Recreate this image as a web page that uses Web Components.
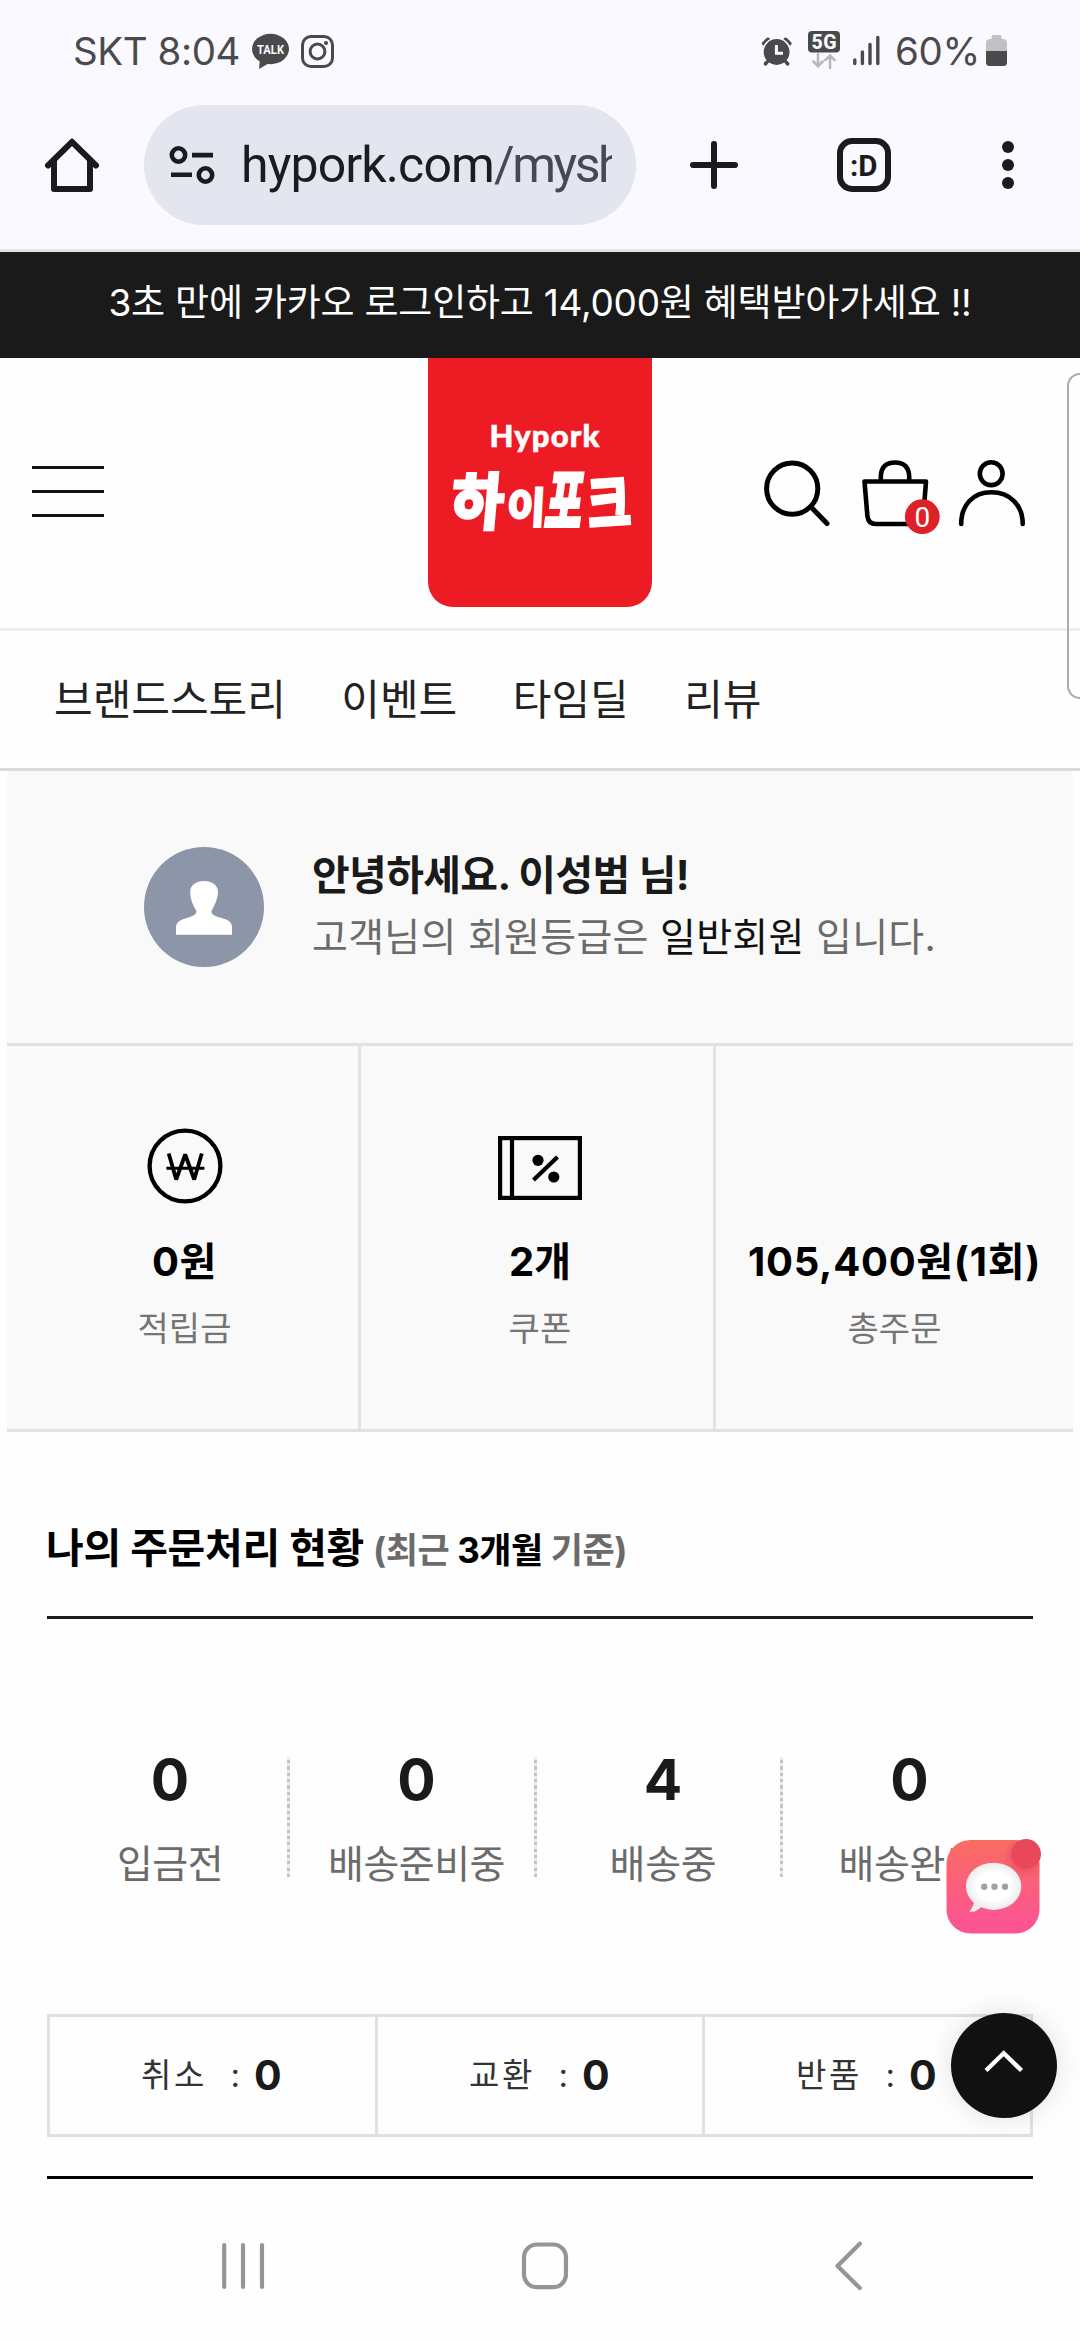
<!DOCTYPE html>
<html lang="ko">
<head>
<meta charset="utf-8">
<title>hypork.com</title>
<style>
  html, body { margin: 0; padding: 0; }
  body { background: #fefefe; font-family: Inter, "Noto Sans CJK KR", sans-serif; color: #1a1a1a; width: 1080px; height: 2340px; overflow: hidden; }
</style>
</head>
<body>
<shop-screen></shop-screen>
<script>
const define = (name, html) => {
  const tpl = document.createElement('template');
  tpl.innerHTML = html;
  customElements.define(name, class extends HTMLElement {
    constructor() {
      super();
      this.attachShadow({ mode: 'open' }).appendChild(tpl.content.cloneNode(true));
    }
  });
};

define('status-bar', `
<style>
  :host { display: flex; align-items: center; height: 102px; padding: 0 73px; box-sizing: border-box; color: #4a4a4c; font: 400 38.5px/102px Inter, sans-serif; }
  .gap { flex: 1; }
  svg { display: block; flex: none; }
</style>
<fit-text w="167">SKT 8:04</fit-text>
<svg width="110" height="102" viewBox="240 0 110 102">
  <ellipse cx="270.5" cy="49" rx="18.5" ry="15.2" fill="#4a4a4c"/>
  <path d="M260 59 L259 69 L271 62Z" fill="#4a4a4c"/>
  <text x="270.5" y="54" font-family="Roboto" font-weight="700" font-size="12.5" fill="#fafaff" text-anchor="middle" textLength="27" lengthAdjust="spacingAndGlyphs">TALK</text>
  <rect x="302.5" y="36.5" width="30" height="30" rx="8.5" fill="none" stroke="#4a4a4c" stroke-width="3"/>
  <circle cx="317.5" cy="51.5" r="7.4" fill="none" stroke="#4a4a4c" stroke-width="3"/>
  <circle cx="326" cy="43" r="2.1" fill="#4a4a4c"/>
</svg>
<span class="gap"></span>
<svg width="128" height="102" viewBox="757 0 128 102">
  <g fill="none" stroke="#4a4a4c" stroke-width="4" stroke-linecap="round">
    <path d="M764 43.5 L768 39.5 M785.5 39.5 L789.5 43.5"/>
    <path d="M767 62 L765.5 63.5 M786 62 L787.5 63.5" stroke-width="3.4"/>
  </g>
  <circle cx="776.6" cy="52" r="14.5" fill="#faf9ff"/>
  <circle cx="776.6" cy="52" r="12.9" fill="#4a4a4c"/>
  <path d="M768 61 L765.500 64 M785.200 61 L787.700 64" stroke="#4a4a4c" stroke-width="3.400" stroke-linecap="round"/>
  <path d="M776.4 45 V53.2 H783" fill="none" stroke="#fafaff" stroke-width="3"/>
  <rect x="808" y="31" width="32" height="21.5" rx="4" fill="#4a4a4c"/>
  <text x="824" y="48.7" font-family="Roboto" font-weight="800" font-size="19.5" fill="#fafaff" text-anchor="middle" textLength="25">5G</text>
  <path d="M818 54 V66 M813.3 61.5 L818 66.2 L822.7 61.5 M830 68 V56 M825.3 60.2 L830 55.5 L834.7 60.2" fill="none" stroke="#b8b8bd" stroke-width="2.5" stroke-linecap="round"/>
  <path d="M854.8 60 V63.5 M862.4 52 V63.5 M870 44.5 V63.5 M877.8 37.5 V63.5" fill="none" stroke="#4a4a4c" stroke-width="3.4" stroke-linecap="round"/>
</svg>
<fit-text w="85" style="margin-left:10px">60%</fit-text>
<svg width="27" height="102" viewBox="980 0 27 102">
  <path d="M991.5 39 V37 Q991.5 35 993.5 35 H999.5 Q1001.500 35 1001.500 37 V39 H1003 Q1007 39 1007 43 V51 H986 V43 Q986 39 990 39Z" fill="#c1c1c4"/>
  <path d="M986 51 H1007 V62.500 Q1007 66 1003.500 66 H989.500 Q986 66 986 62.500Z" fill="#4a4a4c"/>
</svg>
`);

define('browser-bar', `
<style>
  :host { display: flex; align-items: center; height: 150px; box-sizing: border-box; border-bottom: 3px solid #e1e1e6; padding: 0 0 21px; }
  svg { display: block; flex: none; }
  .pill { display: flex; align-items: center; width: 492px; height: 120px; border-radius: 60px; background: #e3e6ef; box-sizing: border-box; }
  .url { width: 371px; overflow: hidden; white-space: nowrap; font: 400 50px/120px Roboto, sans-serif; color: #1b1b21; display: flex; }
  .path { color: #464952; }
</style>
<svg width="144" height="120" viewBox="0 105 144 120" fill="none" stroke="#1b1b1f" stroke-width="6" stroke-linecap="round" stroke-linejoin="round">
  <path d="M48 165.500 L72 141.800 L96 165.500"/><path d="M54 161 V189 H90 V161" />
</svg>
<div class="pill">
  <svg width="97" height="120" viewBox="144 105 97 120" fill="none" stroke="#1b1b1f" stroke-width="4.600">
    <circle cx="178.500" cy="155" r="6.700"/><circle cx="205.500" cy="175" r="6.700"/>
    <path d="M192 155.100 H213 M171 174.800 H192"/>
  </svg>
  <div class="url"><fit-text w="253">hypork.com</fit-text><fit-text class="path" w="129">/mysh</fit-text></div>
</div>
<svg width="444" height="120" viewBox="636 105 444 120">
  <path d="M714 144 V186 M693 165 H735" stroke="#1b1b1f" stroke-width="6" stroke-linecap="round"/>
  <rect x="840" y="141" width="48" height="48" rx="12" fill="none" stroke="#1b1b1f" stroke-width="6"/>
  <text x="850" y="176" font-family="Roboto" font-weight="700" font-size="29.500" fill="#1b1b1f" textLength="27.500">:D</text>
  <g fill="#1b1b1f"><circle cx="1008" cy="147" r="6"/><circle cx="1008" cy="165" r="6"/><circle cx="1008" cy="183" r="6"/></g>
</svg>
`);

define('promo-banner', `
<style>
  :host { display: flex; justify-content: center; height: 106px; background: #1a1a1a; color: #fff; font-size: 37px; line-height: 101px; }
</style>
<fit-text w="863"><slot></slot></fit-text>
`);

define('brand-logo', `
<style>
  :host { display: flex; flex-direction: column; align-items: center; width: 224px; height: 249px; background: #ed1c24; border-radius: 0 0 25px 25px; color: #fff; }
  .en { font: 900 31px/40px Lato, sans-serif; margin: 57px 0 0 10px; -webkit-text-stroke: .6px #fff; }
  .ko { display: flex; width: 182px; height: 66px; margin-top: 8px; margin-left: 2px; font: 700 50px/66px "Noto Sans CJK KR", sans-serif; -webkit-text-stroke: 3px #fff; stroke-linejoin: round; }
  .ko span { display: flex; justify-content: center; }
  .ko span:nth-child(1) { width: 56px; transform: translateY(1px) skewX(-5deg) scale(1.13, 1.22); }
  .ko span:nth-child(2) { width: 41px; transform: translateY(9px) skewX(-3deg) scale(.84, .84); }
  .ko span:nth-child(3) { width: 38px; transform: translateY(0) skewX(-8deg) scale(.8, 1.4); }
  .ko span:nth-child(4) { width: 47px; transform: translateY(3px) rotate(-4deg) scale(.93, 1.22); }
</style>
<fit-text class="en" w="111">Hypork</fit-text>
<div class="ko"><span>하</span><span>이</span><span>포</span><span>크</span></div>
`);

define('shop-header', `
<style>
  :host { display: flex; height: 273px; box-sizing: border-box; border-bottom: 3px solid #ededed; background: #fefefe; }
  .menu { display: flex; flex-direction: column; gap: 21px; margin: 108px 324px 0 32px; width: 72px; }
  .menu i { height: 3px; background: #111; }
  svg { display: block; }
</style>
<div class="menu"><i></i><i></i><i></i></div>
<brand-logo></brand-logo>
<svg width="400" height="269" viewBox="652 358 400 269" fill="none" stroke="#000" stroke-width="5" stroke-linecap="round" stroke-linejoin="round">
  <circle cx="792.200" cy="488.700" r="25.600"/><path d="M811.500 507.500 L827 523.500"/>
  <path d="M864.500 481.500 H926 L923.300 516 Q922.500 524 914 524 H876 Q868.200 524 867.400 516Z" stroke-width="4.600"/>
  <path d="M880.800 481 V476 Q881.500 462.500 895 462.500 Q908.500 462.500 909.200 476 V481" stroke-width="4.600"/>
  <circle cx="991.200" cy="473.700" r="11.400" stroke-width="4.600"/>
  <path d="M961.200 524 C961.200 505 973 492.300 991.200 492.300 C1010 492.300 1022.700 505 1022.700 524" stroke-width="4.600"/>
  <circle cx="922.300" cy="516.700" r="17.400" fill="#dc2128" stroke="none"/>
  <text x="922.300" y="526.500" font-family="Roboto" font-size="28" fill="#fff" stroke="none" text-anchor="middle">0</text>
</svg>
`);

define('shop-nav', `
<style>
  :host { display: flex; gap: 55.500px; height: 140px; box-sizing: border-box; border-bottom: 3px solid #dadada; padding-left: 54px; font-size: 42px; line-height: 137px; color: #222; background: #fefefe; }
</style>
<slot></slot>
`);

define('member-card', `
<style>
  :host { display: flex; height: 272px; margin: 0 7px; background: #f9f9f9; }
  svg { display: block; margin: 76px 48px 0 137px; }
  .t { margin-top: 76px; }
  .hi { font-size: 41px; font-weight: 700; line-height: 57px; }
  .lv { font-size: 39px; line-height: 65px; color: #6b6b6b; }
  b { font-weight: 400; color: #111; }
  .t div { display: flex; }
</style>
<svg width="120" height="120" viewBox="144 847 120 120">
  <circle cx="204" cy="907" r="60" fill="#8c96a8"/>
  <path d="M176 934.700 V927 C176 921 183 919 189 917.300 C194 916 197.500 913.500 196 910 C192 904 190.200 897 190.200 892 C190.200 885 196 881 204 881 C212 881 218 885 218 892 C218 897 215.500 904 212 910 C210 913.500 214 916 219 917.300 C226 919 232 921 232 927 V934.700Z" fill="#fff"/>
</svg>
<div class="t">
  <div class="hi"><fit-text w="377">안녕하세요. 이성범 님!</fit-text></div>
  <div class="lv"><fit-text w="624">고객님의 회원등급은 <b>일반회원</b> 입니다.</fit-text></div>
</div>
`);

define('stat-cell', `
<style>
  :host { display: flex; flex-direction: column; align-items: center; box-sizing: border-box; }
  .icon { height: 100px; margin-top: 70px; display: flex; align-items: center; }
  .v { font-size: 40px; font-weight: 700; line-height: 60px; margin-top: 16px; color: #000; }
  .l { font-size: 34px; line-height: 50px; margin-top: 12px; color: #757575; }
</style>
<div class="icon"><slot name="icon"></slot></div>
<div class="v"><slot name="value"></slot></div>
<div class="l"><slot name="label"></slot></div>
`);

define('member-stats', `
<style>
  :host { display: grid; grid-template-columns: 354px 355px 357px; height: 389px; margin: 0 7px; box-sizing: border-box; border-top: 3px solid #e1e1e1; border-bottom: 3px solid #e1e1e1; background: #f9f9f9; }
  stat-cell + stat-cell { border-left: 3px solid #e3e3e3; margin-left: -3px; }
  .coupon { padding-left: 3px; }
  .coupon svg { margin-top: 4px; }
  .points { padding-left: 1px; }
  svg { display: block; }
</style>
<stat-cell class="points">
  <svg slot="icon" width="80" height="80" viewBox="144.600 1126 80 80" fill="none" stroke="#000">
    <circle cx="184.600" cy="1166" r="35.400" stroke-width="4.300"/>
    <path d="M168.300 1153.500 L175.800 1179.500 L184.800 1154.500 L193.800 1179.500 L201.400 1153.500" stroke-width="3.800" stroke-linejoin="bevel"/>
    <path d="M166 1168.300 H204" stroke-width="3"/>
  </svg>
  <fit-text slot="value" w="65">0원</fit-text><fit-text slot="label" w="94">적립금</fit-text>
</stat-cell>
<stat-cell class="coupon">
  <svg slot="icon" width="84" height="64" viewBox="498 1136 84 64" fill="none" stroke="#000" stroke-width="4.200">
    <rect x="500.100" y="1138.100" width="79.800" height="59.800"/><path d="M512 1137 V1199"/>
    <path d="M533.500 1180 L557.500 1157"/>
    <g fill="#000" stroke="none"><circle cx="538" cy="1160.300" r="5.600"/><circle cx="553.800" cy="1177" r="5.600"/></g>
  </svg>
  <fit-text slot="value" w="62">2개</fit-text><fit-text slot="label" w="63">쿠폰</fit-text>
</stat-cell>
<stat-cell><fit-text slot="value" w="293">105,400원(1회)</fit-text><fit-text slot="label" w="94">총주문</fit-text></stat-cell>
`);

define('order-step', `
<style>
  :host { display: flex; flex-direction: column; align-items: center; height: 120px; }
  .n { font-size: 57px; font-weight: 700; line-height: 60px; margin-top: -7px; }
  .l { font-size: 39px; line-height: 60px; margin-top: 24px; color: #6b6b6b; }
</style>
<div class="n"><slot name="n"></slot></div><div class="l"><slot></slot></div>
`);

define('claim-cell', `
<style>
  :host { display: flex; align-items: center; padding-left: 91px; line-height: 117px; color: #333; font-size: 33px; }
  .c { width: 8px; margin-left: 23.500px; }
  b { font-size: 41px; font-weight: 700; color: #1a1a1a; margin-left: 15.500px; }
</style>
<fit-text w="66"><slot></slot></fit-text><span class="c">:</span><b>0</b>
`);

define('order-section', `
<style>
  :host { display: flex; flex-direction: column; margin: 0 47px; }
  h2 { display: flex; align-items: baseline; margin: 81px 0 0 -1px; height: 103px; font-size: 41px; font-weight: 700; line-height: 70px; color: #000; }
  h2 span { font-size: 35px; margin-left: 9px; color: #6b6b6b; }
  h2 b { color: #000; font-weight: 700; }
  .steps { display: grid; grid-template-columns: repeat(4, 1fr); border-top: 3px solid #1a1a1a; padding-top: 138px; height: 257px; }
  order-step { padding-left: 6px; border-right: 3px solid transparent; border-image: repeating-linear-gradient(#c4c4c4 0 3px, #ececec 3px 6px) 3; border-image-width: 0 3px 0 0; margin-right: 3.500px; }
  order-step:last-child { border-image: none; }
  .claims { display: grid; grid-template-columns: 325px 324px 325px; gap: 3px; background: #e1e1e1; border: 3px solid #e1e1e1; height: 117px; }
  claim-cell { background: #fefefe; }
  hr { border: 0; margin: 39px 0 0; height: 3px; background: #000; width: 100%; }
</style>
<h2><fit-text w="318">나의 주문처리 현황</fit-text><span><fit-text w="254">(최근 <b>3개월</b> 기준)</fit-text></span></h2>
<div class="steps">
  <order-step><span slot="n">0</span><fit-text w="106">입금전</fit-text></order-step>
  <order-step><span slot="n">0</span><fit-text w="177">배송준비중</fit-text></order-step>
  <order-step><span slot="n">4</span><fit-text w="107">배송중</fit-text></order-step>
  <order-step><span slot="n">0</span><fit-text w="142">배송완료</fit-text></order-step>
</div>
<div class="claims"><claim-cell>취소</claim-cell><claim-cell>교환</claim-cell><claim-cell>반품</claim-cell></div>
<hr>
`);

define('system-nav', `
<style>:host { display: block; margin-top: auto; height: 148px; } svg { display: block; }</style>
<svg width="1080" height="148" viewBox="0 2192 1080 148" fill="none" stroke="#959595" stroke-width="4.200" stroke-linecap="round" stroke-linejoin="round">
  <path d="M224.200 2245 V2287 M243 2245 V2287 M262 2245 V2287"/>
  <rect x="524" y="2244.500" width="42" height="42.700" rx="13"/>
  <path d="M859.800 2243.700 L837.500 2266 L859.800 2288"/>
</svg>
`);

define('chat-button', `
<style>:host { position: absolute; left: 936px; top: 1825px; } svg { display: block; }</style>
<svg width="120" height="120" viewBox="936 1825 120 120">
  <defs>
    <linearGradient id="g" x2="0" y2="1"><stop offset="0" stop-color="#f96c61"/><stop offset="1" stop-color="#fd5298"/></linearGradient>
    <radialGradient id="b"><stop offset=".6" stop-color="#fff"/><stop offset="1" stop-color="#ececee"/></radialGradient>
    <radialGradient id="s"><stop offset=".6" stop-color="#e8475a" stop-opacity=".45"/><stop offset="1" stop-color="#e8475a" stop-opacity="0"/></radialGradient>
    <clipPath id="c"><rect x="946.500" y="1840" width="93" height="93.500" rx="24"/></clipPath>
  </defs>
  <rect x="946.500" y="1840" width="93" height="93.500" rx="24" fill="url(#g)"/>
  <circle cx="1025" cy="1857" r="22" fill="url(#s)" clip-path="url(#c)"/>
  <path d="M975 1898 Q974 1906 969.500 1911.500 Q976 1913 982 1906Z" fill="#ececee"/>
  <ellipse cx="993.600" cy="1886.300" rx="27.700" ry="23.600" fill="url(#b)"/>
  <g fill="#a0a0a6"><circle cx="984.200" cy="1886.800" r="3.200"/><circle cx="994.500" cy="1886.800" r="3.200"/><circle cx="1005" cy="1886.800" r="3.200"/></g>
  <circle cx="1026" cy="1854" r="15" fill="#e9485a"/>
</svg>
`);

define('top-button', `
<style>
  :host { position: absolute; left: 951px; top: 2013px; width: 106px; height: 105px; border-radius: 50%; background: #111; box-shadow: 0 0 28px rgba(0,0,0,.12); }
  svg { display: block; }
</style>
<svg width="106" height="105" viewBox="951 2013 106 105" fill="none" stroke="#fff" stroke-width="4.400"><path d="M986 2070.500 L1003.700 2053.200 L1021.500 2070.500"/></svg>
`);

define('side-drawer', `
<style>:host { position: absolute; left: 1067px; top: 373px; width: 40px; height: 326px; box-sizing: border-box; border: 2px solid #acacac; border-radius: 13px; }</style>
`);

define('shop-screen', `
<style>
  :host { display: flex; flex-direction: column; position: relative; width: 1080px; height: 2340px; overflow: hidden; background: #fefefe; }
  .chrome { background: #faf9ff; }
</style>
<div class="chrome"><status-bar></status-bar><browser-bar></browser-bar></div>
<promo-banner>3초 만에 카카오 로그인하고 14,000원 혜택받아가세요 !!</promo-banner>
<shop-header></shop-header>
<shop-nav><span>브랜드스토리</span><span>이벤트</span><span>타임딜</span><span>리뷰</span></shop-nav>
<member-card></member-card>
<member-stats></member-stats>
<order-section></order-section>
<system-nav></system-nav>
<side-drawer></side-drawer>
<chat-button></chat-button>
<top-button></top-button>
`);

/* One-line label whose tracking is tuned so that it spans the width given in "w". */
customElements.define('fit-text', class extends HTMLElement {
  constructor() {
    super();
    this.attachShadow({ mode: 'open' }).innerHTML =
      '<style>:host{display:inline-block;white-space:nowrap}span{display:inline-block}</style><span><slot></slot></span>';
  }
  connectedCallback() {
    const span = this.shadowRoot.querySelector('span');
    const w = +this.getAttribute('w');
    const inner = this.querySelector('slot');
    const text = inner ? inner.assignedNodes().map(n => n.textContent).join('') : this.textContent;
    this.style.width = w + 'px';
    span.style.letterSpacing = '0px';
    const natural = span.getBoundingClientRect().width;
    span.style.letterSpacing = ((w - natural) / text.length) + 'px';
  }
});
</script>
</body>
</html>
